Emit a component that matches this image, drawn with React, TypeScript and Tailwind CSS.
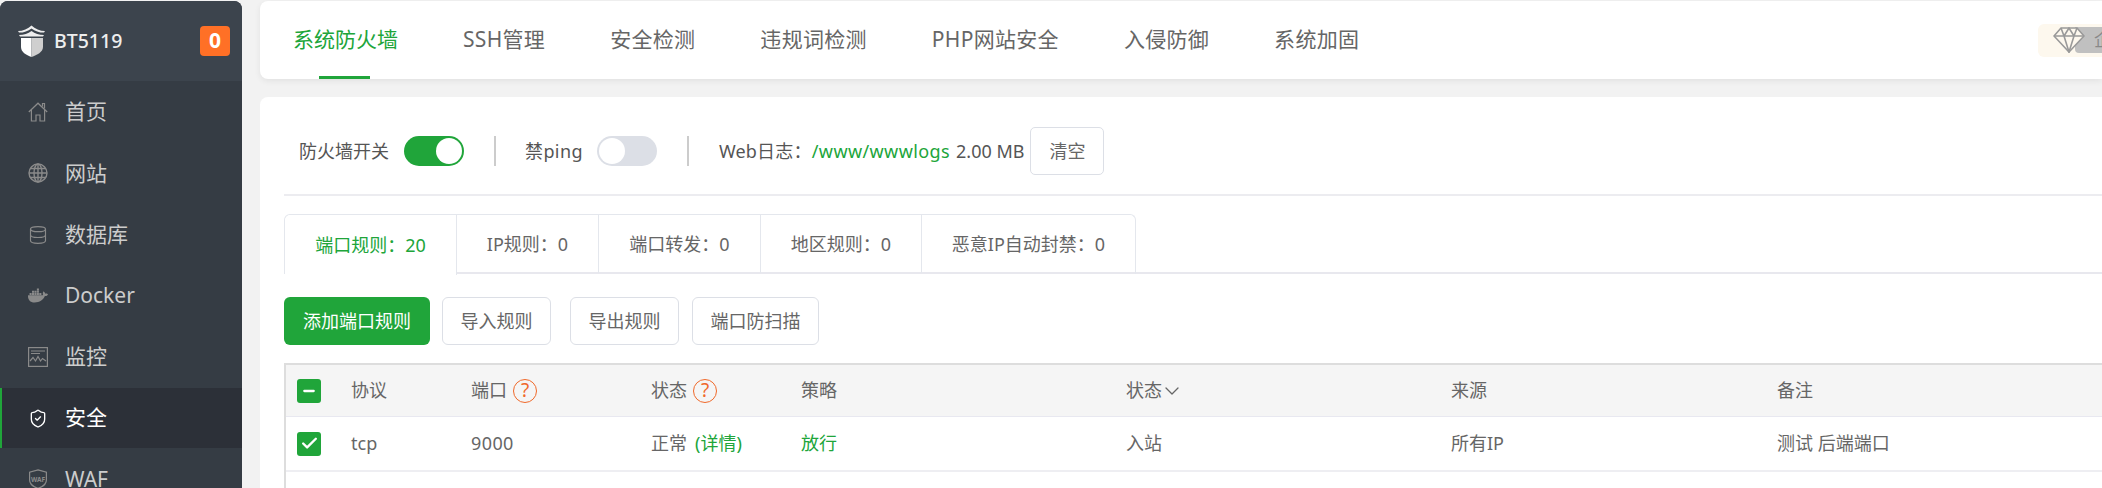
import React, { FC } from "react";
import { Database, ShieldCheck, ChevronDown, Check, Minus } from "lucide-react";
import { FaDocker } from "react-icons/fa";

const HomeIcon = () => (
  <svg viewBox="0 0 20 20" className="w-5 h-5" fill="none" stroke="currentColor" strokeWidth="1.2">
    <path d="M0.8 10 L10 1.2 L19.2 10" />
    <path d="M3.4 8 V19 H8 V13 H12 V19 H16.6 V8" />
    <path d="M14.5 4.5 V1.5 H16.5 V6.5" />
  </svg>
);

const GlobeIcon = () => (
  <svg viewBox="0 0 20 20" className="w-5 h-5" fill="none" stroke="currentColor" strokeWidth="1.4">
    <circle cx="10" cy="10" r="9" />
    <ellipse cx="10" cy="10" rx="4" ry="9" />
    <path d="M10 1 V19 M1 10 H19 M2.2 5.5 H17.8 M2.2 14.5 H17.8" />
  </svg>
);

const MonitorIcon = () => (
  <svg viewBox="0 0 20 20" className="w-5 h-5" fill="none" stroke="currentColor" strokeWidth="1.2">
    <rect x="0.6" y="0.6" width="18.8" height="18.8" />
    <path d="M3 4 H17 M3 6.5 H12" />
    <path d="M2 14 L5 10.5 L7.5 14 L10 9.5 L12.5 14 L14.5 11.5 L18 14" />
  </svg>
);

const WafIcon = () => (
  <svg viewBox="0 0 20 20" className="w-5 h-5" fill="none" stroke="currentColor" strokeWidth="1.2">
    <path d="M10 0.8 L18.4 3.2 V11 C18.4 15 14 18 10 19.4 C6 18 1.6 15 1.6 11 V3.2 Z" />
    <text x="10" y="12.5" textAnchor="middle" fontSize="6.5" fontWeight="700" fill="currentColor" stroke="none">
      WAF
    </text>
  </svg>
);

const Logo = () => (
  <svg viewBox="0 0 29 32" className="w-[29px] h-8 shrink-0">
    <path d="M1 6 C6 6 11 4 14.5 0.5 C18 4 23 6 28 6 L27 7.6 C22 7.6 18 6 14.5 3.4 C11 6 7 7.6 2 7.6 Z" fill="#eeeeee" />
    <path d="M2 10 C7 10 11 8.6 14.5 6 C18 8.6 22 10 27 10 L26 11.4 H3 Z" fill="#eeeeee" />
    <path d="M4 13 H14.5 V32 C9 30 4 27 4 22 Z" fill="#ffffff" />
    <path d="M14.5 13 H26 V22 C26 27 20 30 14.5 32 Z" fill="#cfcfcf" />
  </svg>
);

const menuItems = [
  { name: "首页", icon: <HomeIcon /> },
  { name: "网站", icon: <GlobeIcon /> },
  { name: "数据库", icon: <Database size={20} strokeWidth={1.4} /> },
  { name: "Docker", icon: <FaDocker size={21} /> },
  { name: "监控", icon: <MonitorIcon /> },
  { name: "安全", icon: <ShieldCheck size={21} strokeWidth={1.6} />, active: true },
  { name: "WAF", icon: <WafIcon /> },
];

const Sidebar = () => (
  <div className="w-[242px] shrink-0 h-full mt-px rounded-t-[8px] overflow-hidden bg-[#353c44]">
    <div className="h-[80px] bg-[#3c444d] flex items-center pl-[17px] pr-3">
      <Logo />
      <span className="ml-2 text-[19.5px] font-medium text-[#eeeeee]">BT5119</span>
      <span className="ml-auto w-[30px] h-[30px] rounded-[4px] bg-[#ff7026] flex items-center justify-center text-[21px] font-bold text-white">
        0
      </span>
    </div>
    {menuItems.map((item) => (
      <div
        key={item.name}
        className={
          item.active
            ? "h-[60px] mt-[1.2px] flex items-center border-l-2 border-[#20a53a] bg-[#2c3038] pl-[26px] text-white"
            : "h-[60px] mt-[1.2px] flex items-center pl-[28px] text-[#cccccc]"
        }
      >
        <span className={item.active ? "w-5 flex justify-center text-white" : "w-5 flex justify-center text-[#8a8a8a]"}>
          {item.icon}
        </span>
        <span className="ml-[17px] text-[21px]">{item.name}</span>
      </div>
    ))}
  </div>
);

const topTabs = ["SSH管理", "安全检测", "违规词检测", "PHP网站安全", "入侵防御", "系统加固"];

const TopBar = () => (
  <div className="h-[78px] bg-white rounded-l-[8px] shadow-[0_2px_6px_rgba(0,0,0,0.07)] flex items-start justify-between overflow-hidden">
    <div className="flex h-full text-[21px] text-[#666666]">
      <div className="relative ml-[33px] flex items-center text-[#20a53a]">
        系统防火墙
        <span className="absolute bottom-0 left-[26px] w-[51px] h-[3px] bg-[#20a53a]" />
      </div>
      {topTabs.map((t) => (
        <div key={t} className="ml-[65px] flex items-center tracking-[0.3px]">
          {t}
        </div>
      ))}
    </div>
    <div className="mt-[23px] w-[64px] h-[33px] bg-[#fdf8ee] rounded-l-[6px] relative overflow-hidden">
      <div className="absolute left-[37px] top-[3px] h-[26px] w-[40px] bg-[#c0c0c0] rounded-bl-[4px] text-[#888888] text-[17px] pl-[19px] leading-[26px] whitespace-nowrap">
        企
      </div>
      <svg viewBox="0 0 32 26" className="absolute left-[15px] top-[3px] w-8 h-[26px]" fill="#fdf8ee" stroke="#999999" strokeWidth="1.6">
        <path d="M8 1 H24 L31 9 L16 25 L1 9 Z" />
        <path d="M1 9 H31 M8 1 L11 9 L16 25 L21 9 L24 1 M11 9 L16 1 L21 9" fill="none" />
      </svg>
    </div>
  </div>
);

const Toggle: FC<{ on?: boolean }> = ({ on }) => (
  <span
    className={
      on
        ? "w-[60px] h-[30px] rounded-full bg-[#20a53a] flex items-center justify-end px-[2px]"
        : "w-[60px] h-[30px] rounded-full bg-[#dcdfe6] flex items-center px-[2px]"
    }
  >
    <span className="w-[26px] h-[26px] rounded-full bg-white" />
  </span>
);

const Divider: FC<{ className: string }> = ({ className }) => (
  <span className={`block w-[2px] h-[30px] bg-[#cccccc] ${className}`} />
);

const SwitchRow = () => (
  <div className="h-[48px] flex items-center pl-[15px] text-[18px] text-[#555555]">
    <span>防火墙开关</span>
    <span className="ml-[15px]">
      <Toggle on />
    </span>
    <Divider className="ml-[30px]" />
    <span className="ml-[29px] tracking-[0.4px]">禁ping</span>
    <span className="ml-[14px]">
      <Toggle />
    </span>
    <Divider className="ml-[30px]" />
    <span className="ml-[30px] tracking-[0.2px]">Web日志：</span>
    <span className="text-[#20a53a] tracking-[0.4px]">/www/wwwlogs</span>
    <span className="ml-[6px]">2.00 MB</span>
    <button className="ml-[6px] w-[74px] h-[48px] bg-white border border-[#dcdfe6] rounded-[5px] text-[#666666]">
      清空
    </button>
  </div>
);

const ruleTabs = [
  { label: "端口规则：20", w: "w-[172px]", active: true },
  { label: "IP规则：0", w: "w-[142px]" },
  { label: "端口转发：0", w: "w-[162px]" },
  { label: "地区规则：0", w: "w-[161px]" },
  { label: "恶意IP自动封禁：0", w: "w-[213px]" },
];

const RuleTabs = () => (
  <div className="mt-[18px] h-[60px] flex border-b-2 border-[#e8e8ee] text-[18px]">
    <div className="flex h-[60px] border border-b-0 border-[#e4e7ed] rounded-t-[6px]">
      {ruleTabs.map((t) => (
        <div
          key={t.label}
          className={
            t.active
              ? `${t.w} h-[60px] -mb-px bg-white border-r border-[#e4e7ed] flex items-center justify-center text-[#20a53a] rounded-tl-[6px]`
              : `${t.w} h-[58px] border-r border-[#e4e7ed] last:border-r-0 flex items-center justify-center text-[#666666]`
          }
        >
          {t.label}
        </div>
      ))}
    </div>
  </div>
);

const ActionButtons = () => (
  <div className="mt-[23px] flex text-[18px] text-[#666666]">
    <button className="w-[146px] h-[48px] rounded-[6px] bg-[#20a53a] text-white">添加端口规则</button>
    <button className="ml-3 w-[109px] h-[48px] rounded-[6px] border border-[#dcdfe6] bg-white">导入规则</button>
    <button className="ml-[19px] w-[109px] h-[48px] rounded-[6px] border border-[#dcdfe6] bg-white">导出规则</button>
    <button className="ml-[13px] w-[127px] h-[48px] rounded-[6px] border border-[#dcdfe6] bg-white">端口防扫描</button>
  </div>
);

const Hint = () => (
  <span className="ml-[6px] w-6 h-6 rounded-full border border-[#f0692a] text-[#f0692a] text-[19px] flex items-center justify-center">
    ?
  </span>
);

const GreenBox: FC<{ children: React.ReactNode }> = ({ children }) => (
  <span className="w-6 h-6 rounded-[3px] bg-[#20a53a] text-white flex items-center justify-center">{children}</span>
);

const cols = "grid grid-cols-[65px_120px_180px_150px_325px_325px_326px_1fr] items-center";

const RuleTable = () => (
  <div className="mt-[18px] h-[140px] border-t-2 border-l-2 border-[#dddddd] text-[18px] text-[#666666]">
    <div className={`${cols} h-[52px] bg-[#f5f5f5] border-b border-[#e8e8f0]`}>
      <span className="pl-[11px]">
        <GreenBox>
          <Minus size={16} strokeWidth={3.5} />
        </GreenBox>
      </span>
      <span>协议</span>
      <span className="flex items-center">
        端口
        <Hint />
      </span>
      <span className="flex items-center">
        状态
        <Hint />
      </span>
      <span>策略</span>
      <span className="flex items-center">
        状态
        <ChevronDown size={24} strokeWidth={1.3} className="-ml-[2px]" />
      </span>
      <span>来源</span>
      <span>备注</span>
    </div>
    <div className={`${cols} h-[55px] border-b-2 border-[#eeeef2]`}>
      <span className="pl-[11px]">
        <GreenBox>
          <Check size={19} strokeWidth={3} />
        </GreenBox>
      </span>
      <span>tcp</span>
      <span className="tracking-[0.4px]">9000</span>
      <span>
        正常<span className="ml-2 text-[#20a53a]">(详情)</span>
      </span>
      <span className="text-[#20a53a]">放行</span>
      <span>入站</span>
      <span>所有IP</span>
      <span>测试 后端端口</span>
    </div>
  </div>
);

export default function App() {
  return (
    <div className="w-[2102px] h-[488px] overflow-hidden bg-[#f2f2f2] flex font-['Noto_Sans','Noto_Sans_CJK_SC',sans-serif]">
      <Sidebar />
      <div className="flex-1 min-w-0 pl-[18px] pt-px">
        <TopBar />
        <div className="mt-[18px] h-[400px] bg-white rounded-l-[8px] pt-[30px] pl-6">
          <SwitchRow />
          <div className="mt-[19px] h-[2px] bg-[#ececf0]" />
          <RuleTabs />
          <ActionButtons />
          <RuleTable />
        </div>
      </div>
    </div>
  );
}
